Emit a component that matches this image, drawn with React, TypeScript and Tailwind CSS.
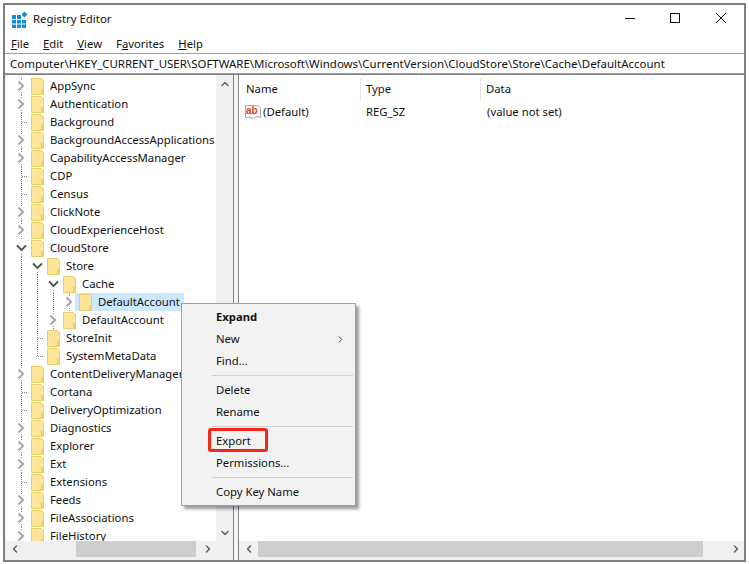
import { ChevronRight, ChevronDown, ChevronUp, ChevronLeft } from "lucide-react";

type TreeRow = {
  name: string;
  level: number;
  kind: "closed" | "open" | "leaf";
  selected?: boolean;
  last?: boolean;
};

const rows: TreeRow[] = [
  { name: "AppSync", level: 0, kind: "closed" },
  { name: "Authentication", level: 0, kind: "closed" },
  { name: "Background", level: 0, kind: "leaf" },
  { name: "BackgroundAccessApplications", level: 0, kind: "closed" },
  { name: "CapabilityAccessManager", level: 0, kind: "closed" },
  { name: "CDP", level: 0, kind: "leaf" },
  { name: "Census", level: 0, kind: "leaf" },
  { name: "ClickNote", level: 0, kind: "closed" },
  { name: "CloudExperienceHost", level: 0, kind: "closed" },
  { name: "CloudStore", level: 0, kind: "open" },
  { name: "Store", level: 1, kind: "open" },
  { name: "Cache", level: 2, kind: "open" },
  { name: "DefaultAccount", level: 3, kind: "closed", selected: true },
  { name: "DefaultAccount", level: 2, kind: "closed" },
  { name: "StoreInit", level: 1, kind: "leaf" },
  { name: "SystemMetaData", level: 1, kind: "leaf", last: true },
  { name: "ContentDeliveryManager", level: 0, kind: "closed" },
  { name: "Cortana", level: 0, kind: "leaf" },
  { name: "DeliveryOptimization", level: 0, kind: "leaf" },
  { name: "Diagnostics", level: 0, kind: "closed" },
  { name: "Explorer", level: 0, kind: "closed" },
  { name: "Ext", level: 0, kind: "closed" },
  { name: "Extensions", level: 0, kind: "leaf" },
  { name: "Feeds", level: 0, kind: "closed" },
  { name: "FileAssociations", level: 0, kind: "closed" },
  { name: "FileHistory", level: 0, kind: "closed" },
];

function Folder() {
  return (
    <svg width="13" height="17" viewBox="0 0 13 17" className="shrink-0">
      <path d="M0.5 0.5H10.5L12.5 2.5V16.5H0.5Z" fill="#fde59a" stroke="#eccb6a" />
      <path d="M10.5 11.5H12.5V16.5H10.5Z" fill="#f7d774" stroke="#eccb6a" />
    </svg>
  );
}

const dots = { stroke: "#808080", strokeDasharray: "1 1", fill: "none", shapeRendering: "crispEdges" as const };

function Expander({ row }: { row: TreeRow }) {
  return (
    <svg width="16" height="18" viewBox="0 0 16 18" className="shrink-0">
      {row.kind === "closed" && (
        <>
          <path d="M8.5 0V3M8.5 15V18" {...dots} />
          <path d="M5.5 4.5L10 9L5.5 13.5" stroke="#a6a6a6" strokeWidth="2" fill="none" />
        </>
      )}
      {row.kind === "open" && (
        <>
          <path d="M8.5 15V18" {...dots} />
          <path d="M4 6.5L8.5 11L13 6.5" stroke="#505050" strokeWidth="1.8" fill="none" />
        </>
      )}
      {row.kind === "leaf" && <path d={row.last ? "M8.5 0V9.5H15" : "M8.5 0V18M8.5 9.5H15"} {...dots} />}
    </svg>
  );
}

function Row({ row }: { row: TreeRow }) {
  return (
    <div className="flex h-[18px] items-center pl-[7px]">
      {Array.from({ length: row.level }).map((_, i) => (
        <svg key={i} width="16" height="18" viewBox="0 0 16 18" className="shrink-0">
          <path d="M8.5 0V18" {...dots} />
        </svg>
      ))}
      <Expander row={row} />
      <div className={`ml-[-2px] flex h-[18px] items-center pl-[4px] ${row.selected ? "bg-[#cce8ff]" : ""}`}>
        <Folder />
        <span className="pl-[6px] pr-[4px] whitespace-nowrap">{row.name}</span>
      </div>
    </div>
  );
}

function MenuItem({ children, bold, arrow }: { children: string; bold?: boolean; arrow?: boolean }) {
  return (
    <div className={`flex h-[22px] items-center justify-between pl-[34px] pr-[9px] ${bold ? "font-bold" : ""}`}>
      <span>{children}</span>
      {arrow && <ChevronRight size={11} strokeWidth={2} className="text-[#333]" />}
    </div>
  );
}

function Divider() {
  return <div className="my-[3px] ml-[30px] mr-[2px] h-px bg-[#d0d0d0]" />;
}

export default function App() {
  return (
    <div className="h-[564px] w-[749px] overflow-hidden bg-white pl-[3px] pr-[3px] pt-[3px] text-[11.3px] text-[#111] [font-family:'Noto_Sans',sans-serif]">
      <div className="relative flex h-[559px] flex-col border-[2px] border-[#7f7f7f] bg-white">
        {/* Title bar */}
        <div className="flex h-[28px] shrink-0 items-center pl-[6px]">
          <svg width="17" height="17" viewBox="0 0 17 17" className="mt-[1px] shrink-0">
            <path d="M1 4H5V8H1ZM6 4H10V8H6ZM1 9H5V12.5H1ZM6 9H10V12.5H6ZM11 9H15V12.5H11ZM1 13.5H5V17H1ZM6 13.5H10V17H6ZM11 13.5H15V17H11Z" fill="#0d8ddb" />
            <path d="M13.5 0.5L16.5 3.5L13.5 6.5L10.5 3.5Z" fill="#2b86c4" />
          </svg>
          <span className="ml-[5px] text-[11.4px]">Registry Editor</span>
          <div className="ml-auto flex items-center">
            <svg width="46" height="14" viewBox="0 0 46 14">
              <path d="M19 6.5H29" stroke="#111" />
            </svg>
            <svg width="46" height="14" viewBox="0 0 46 14">
              <rect x="18.5" y="1.5" width="9" height="9" fill="none" stroke="#111" />
            </svg>
            <svg width="46" height="14" viewBox="0 0 46 14">
              <path d="M18 1L28 11M28 1L18 11" stroke="#111" />
            </svg>
          </div>
        </div>

        {/* Menu bar */}
        <div className="flex h-[20px] shrink-0 items-center gap-[14px] pl-[6px] pt-[3px]">
          <span><u>F</u>ile</span>
          <span><u>E</u>dit</span>
          <span><u>V</u>iew</span>
          <span>F<u>a</u>vorites</span>
          <span><u>H</u>elp</span>
        </div>

        {/* Address bar */}
        <div className="flex h-[21px] shrink-0 items-center border-y border-[#a0a0a0] pl-[5px] pt-[1px] text-[11.48px] whitespace-nowrap">
          Computer\HKEY_CURRENT_USER\SOFTWARE\Microsoft\Windows\CurrentVersion\CloudStore\Store\Cache\DefaultAccount
        </div>

        <div className="flex min-h-0 flex-1 border-t border-[#7f7f7f] bg-[#f0f0f0] pl-[1px]">
          {/* Tree pane */}
          <div className="flex w-[227px] shrink-0 flex-col pb-[3px]">
            <div className="flex min-h-0 flex-1">
              <div className="min-w-0 flex-1 overflow-hidden bg-white pt-[2px]">
                {rows.map((r, i) => (
                  <Row key={i} row={r} />
                ))}
              </div>
              <div className="flex w-[17px] shrink-0 flex-col items-center justify-between bg-[#f0f0f0]">
                <div className="flex h-[17px] w-full items-center justify-center">
                  <ChevronUp size={12} strokeWidth={3} className="text-[#606060]" />
                </div>
                <div className="flex h-[17px] w-full items-center justify-center">
                  <ChevronDown size={12} strokeWidth={3} className="text-[#606060]" />
                </div>
              </div>
            </div>
            <div className="flex h-[16px] shrink-0 items-center bg-[#f0f0f0]">
              <ChevronLeft size={12} strokeWidth={3} className="ml-[3px] text-[#606060]" />
              <div className="ml-[55px] h-full w-[120px] bg-[#cdcdcd]" />
              <ChevronRight size={12} strokeWidth={3} className="ml-[6px] text-[#606060]" />
            </div>
          </div>

          {/* Splitter */}
          <div className="w-[6px] shrink-0 border-x border-[#808080] bg-[#f4f4f4]" />

          {/* Value pane */}
          <div className="flex min-w-0 flex-1 flex-col pb-[3px]">
            <div className="min-h-0 flex-1 bg-white pt-[2px]">
              <div className="flex h-[24px] items-center">
                <div className="w-[122px] border-r border-[#e5e5e5] pl-[7px] leading-[22px]">Name</div>
                <div className="w-[120px] border-r border-[#e5e5e5] pl-[5px] leading-[22px]">Type</div>
                <div className="pl-[5px] leading-[22px]">Data</div>
              </div>
              <div className="mt-[2px] flex h-[18px] items-center">
                <div className="flex w-[122px] items-center pl-[6px]">
                  <svg width="16" height="16" viewBox="0 0 16 16" className="shrink-0">
                    <path d="M0.5 1.5H12.5L15.5 4V13.5L12 12.5L8 14.5L4 13L0.5 14Z" fill="#fff" stroke="#a8a8a8" />
                    <text x="1" y="10" fontSize="10" fontWeight="700" fill="#d9402a" fontFamily="Liberation Sans">ab</text>
                  </svg>
                  <span className="ml-[2px]">(Default)</span>
                </div>
                <div className="w-[120px] pl-[5px]">REG_SZ</div>
                <div className="pl-[6px]">(value not set)</div>
              </div>
            </div>
            <div className="flex h-[16px] shrink-0 items-center bg-[#f0f0f0]">
              <ChevronLeft size={12} strokeWidth={3} className="ml-[4px] text-[#606060]" />
              <div className="ml-[3px] h-full w-[445px] bg-[#cdcdcd]" />
              <ChevronRight size={12} strokeWidth={3} className="ml-[27px] text-[#606060]" />
            </div>
          </div>
        </div>

        {/* Context menu */}
        <div className="absolute left-[176px] top-[298px] w-[175px] border border-[#a0a0a0] bg-[#f2f2f2] py-[2px] shadow-[3px_3px_3px_rgba(0,0,0,0.4)]">
          <MenuItem bold>Expand</MenuItem>
          <MenuItem arrow>New</MenuItem>
          <MenuItem>Find...</MenuItem>
          <Divider />
          <MenuItem>Delete</MenuItem>
          <MenuItem>Rename</MenuItem>
          <Divider />
          <div className="relative">
            <MenuItem>Export</MenuItem>
            <div className="absolute left-[26px] top-[-2px] h-[24px] w-[60px] rounded-[3px] border-[3px] border-[#f3261c]" />
          </div>
          <MenuItem>Permissions...</MenuItem>
          <Divider />
          <MenuItem>Copy Key Name</MenuItem>
        </div>
      </div>
    </div>
  );
}
